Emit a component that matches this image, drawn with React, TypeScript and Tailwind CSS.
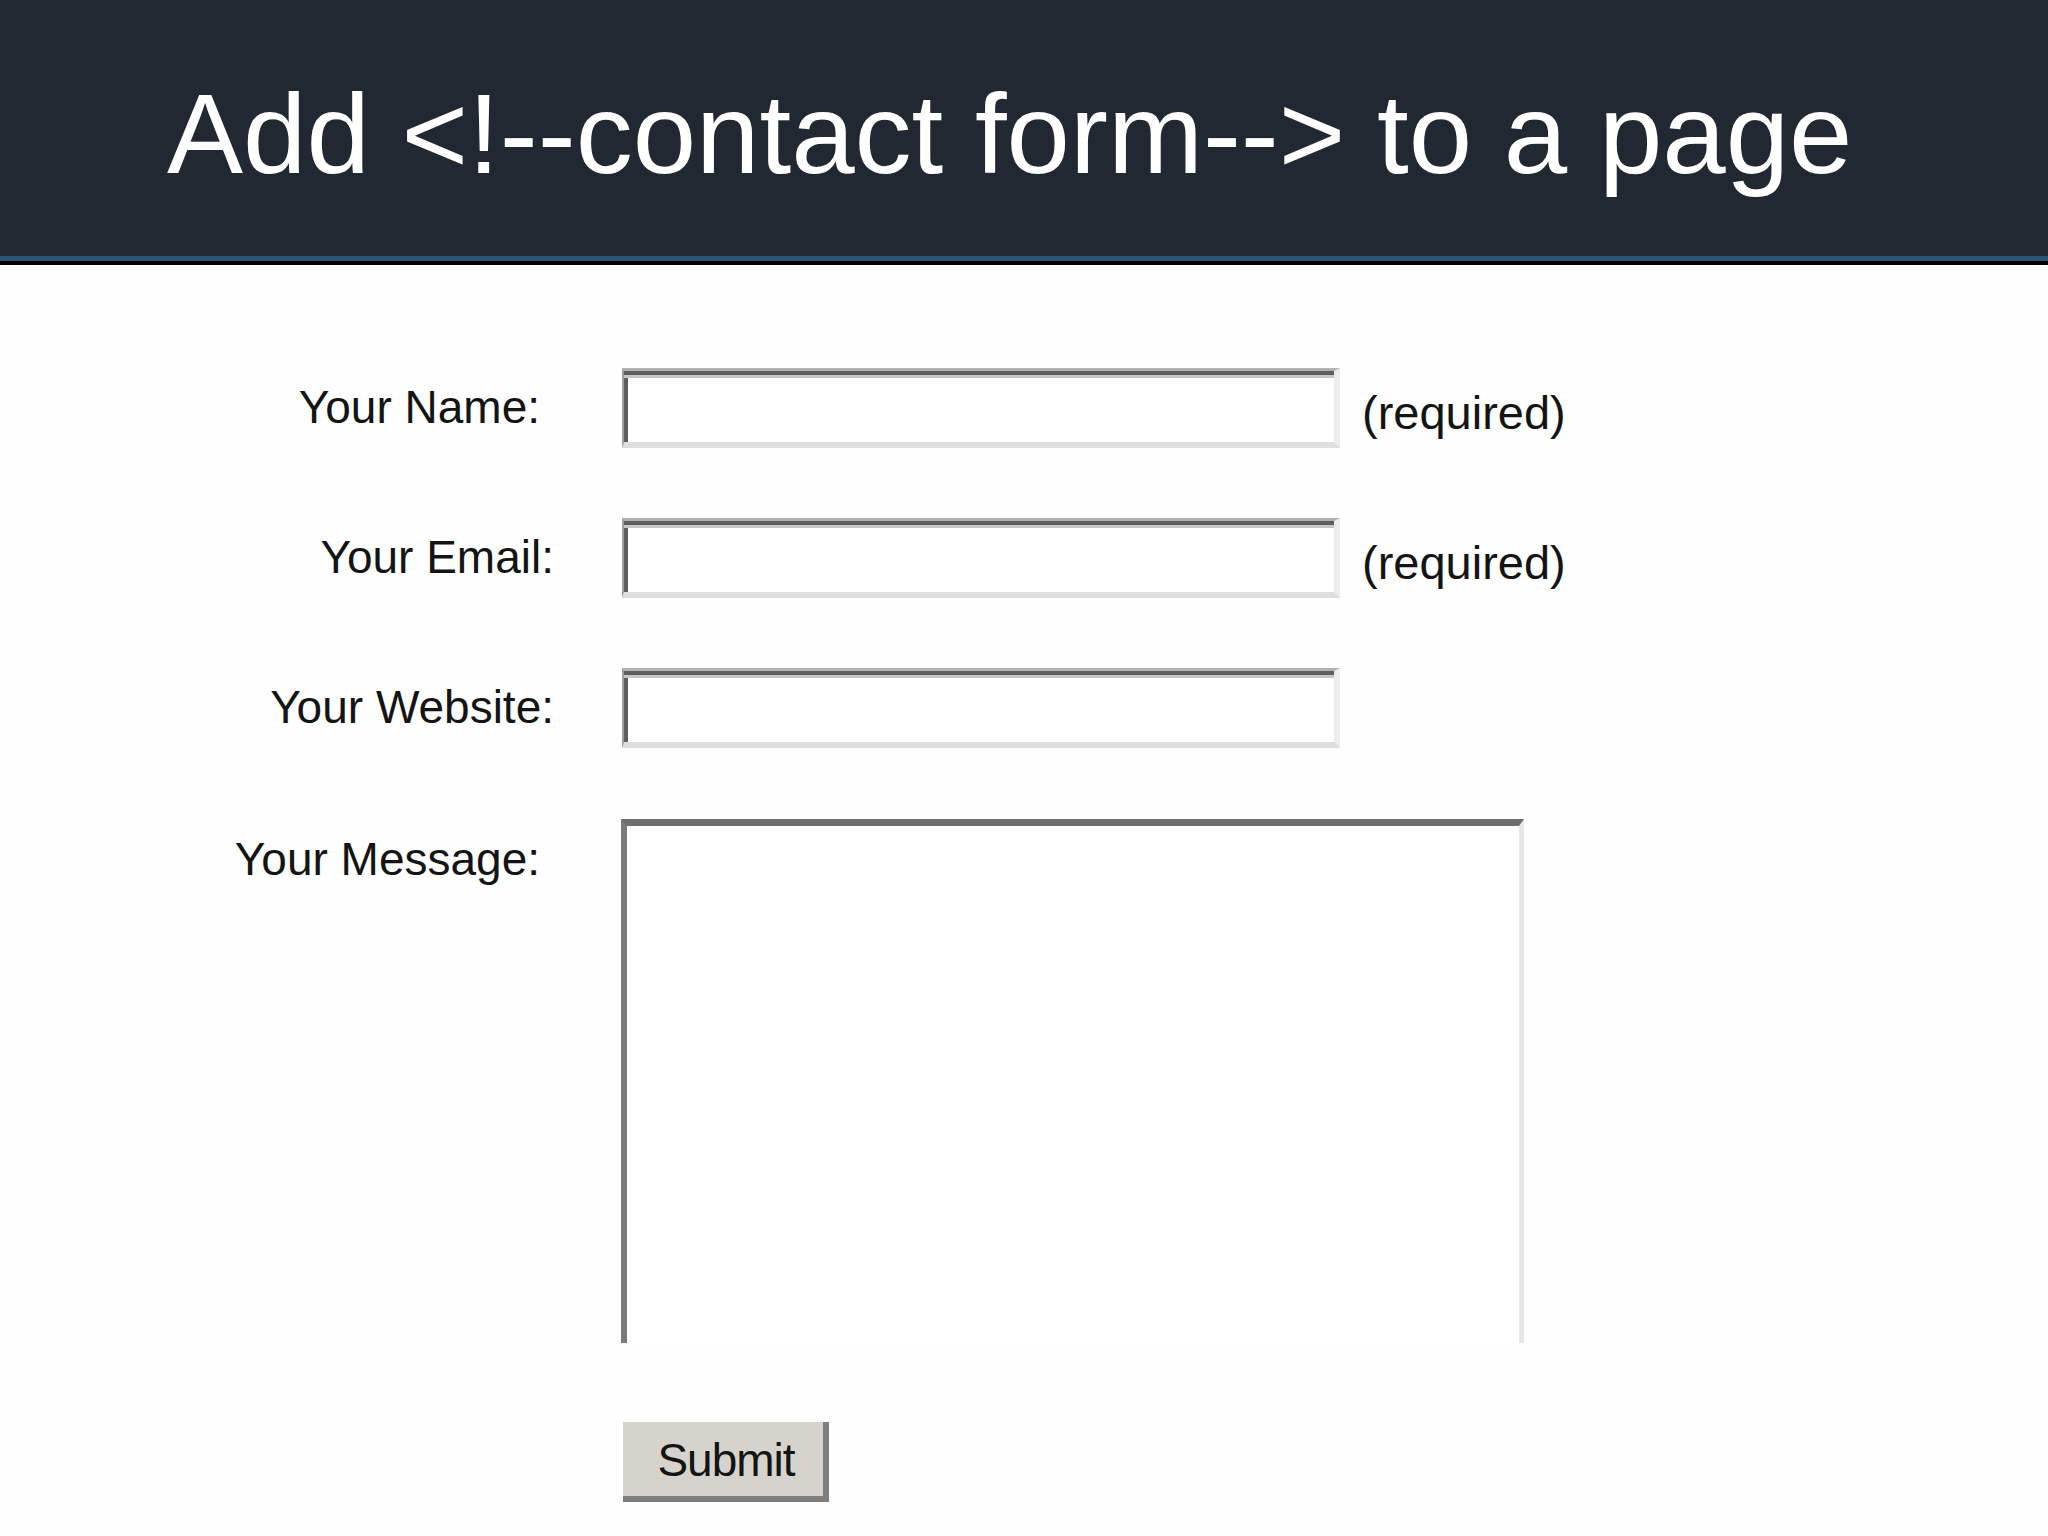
import React from "react";

const labelCls =
  "w-[554px] shrink-0 text-right pt-[16px] text-[46px] leading-none whitespace-nowrap";
const inputCls =
  "block w-[718px] h-[80px] bg-white outline-none border-solid border-t-[3px] border-t-[#b2b2b2] border-l-[2px] border-l-[#9c9c9c] border-b-[6px] border-b-[#dedede] border-r-[6px] border-r-[#ececec] shadow-[inset_0_4px_0_#5f5f5f,inset_0_7px_0_#c6c6c6,inset_4px_0_0_#5f5f5f]";
const reqCls = "ml-[22px] pt-[21px] text-[47px] leading-none whitespace-nowrap";

export default function App() {
  return (
    <div className="w-[2048px] min-h-[1536px] bg-[#fefefe] font-['Liberation_Sans',Arial,sans-serif]">
      <header className="h-[256px] bg-[#212831] pl-[167px] pt-[77px]">
        <h1 className="text-[114px] leading-none text-white whitespace-nowrap font-normal">
          Add &lt;!--contact form--&gt; to a page
        </h1>
      </header>
      <div className="h-[5px] bg-[#2b5274]" />
      <div className="h-[4px] bg-black" />
      <main className="pt-[103px] text-[#141414]">
        <div className="flex h-[150px]">
          <div className={labelCls + " pr-[14px]"}>Your Name:</div>
          <div className="ml-[68px]">
            <input type="text" className={inputCls} />
          </div>
          <span className={reqCls}>(required)</span>
        </div>
        <div className="flex h-[150px]">
          <div className={labelCls}>Your Email:</div>
          <div className="ml-[68px]">
            <input type="text" className={inputCls} />
          </div>
          <span className={reqCls}>(required)</span>
        </div>
        <div className="flex h-[151px]">
          <div className={labelCls}>Your Website:</div>
          <div className="ml-[68px]">
            <input type="text" className={inputCls} />
          </div>
        </div>
        <div className="flex">
          <div className="w-[554px] shrink-0 text-right pt-[17px] pr-[14px] text-[46px] leading-none whitespace-nowrap">
            Your Message:
          </div>
          <div className="ml-[67px]">
            <textarea className="block w-[903px] h-[524px] resize-none bg-white outline-none border-solid border-t-[7px] border-t-[#6e6e6e] border-l-[6px] border-l-[#7a7a7a] border-r-[5px] border-r-[#e6e6e6] border-b-0" />
          </div>
        </div>
        <div className="pl-[623px] mt-[79px]">
          <button
            type="button"
            className="flex items-center justify-center w-[206px] h-[80px] bg-[#d6d3cd] border-solid border-r-[6px] border-r-[#7e7e7e] border-b-[6px] border-b-[#7e7e7e] text-[46px] leading-none tracking-[-1px] text-[#141414] pl-[6px] pt-[2px]"
          >
            Submit
          </button>
        </div>
      </main>
    </div>
  );
}
